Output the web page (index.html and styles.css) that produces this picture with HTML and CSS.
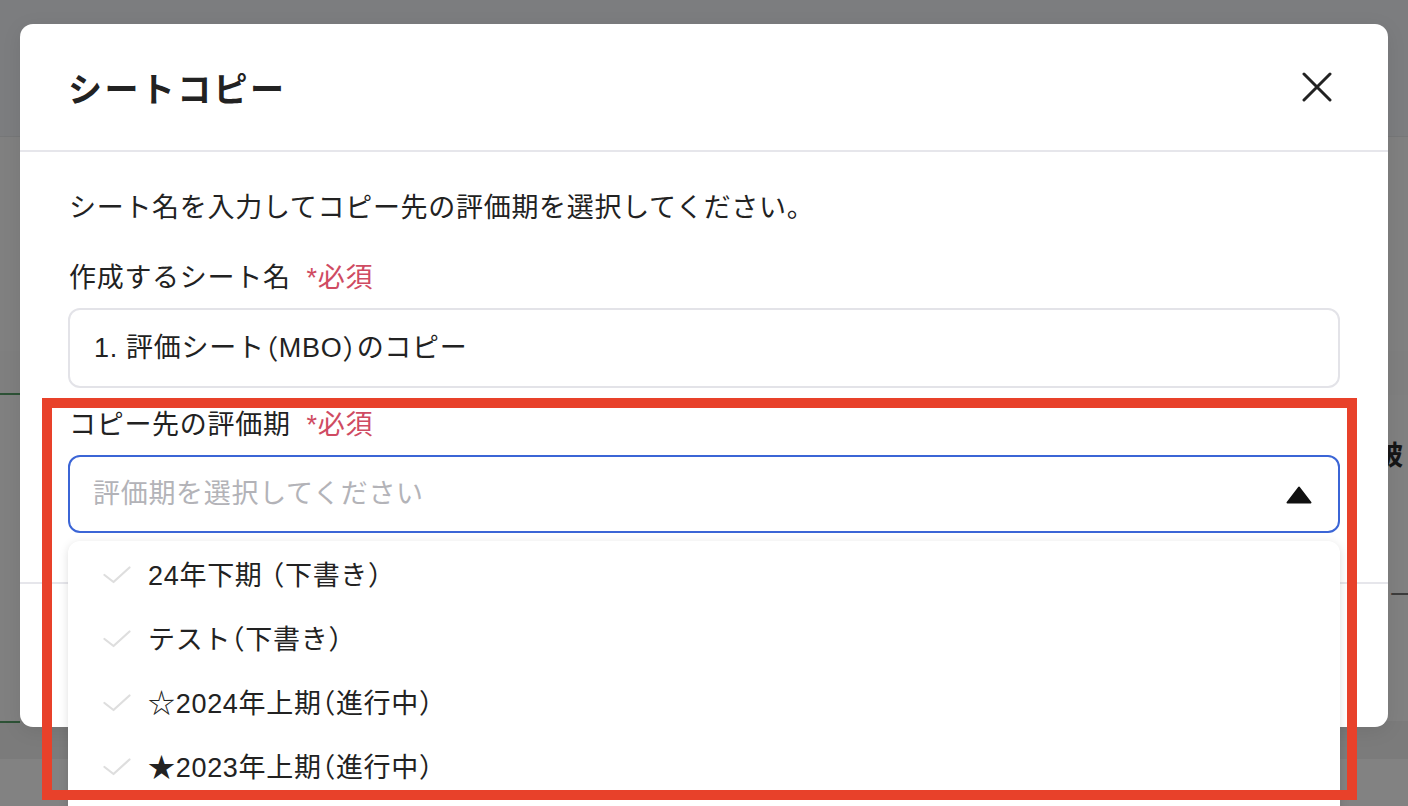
FILE: index.html
```html
<!DOCTYPE html>
<html lang="ja">
<head>
<meta charset="utf-8">
<title>シートコピー</title>
<link rel="stylesheet" href="styles.css">
</head>
<body>
<div class="page">
  <div class="page-header"></div>
  <div class="page-row row-a"></div>
  <div class="page-row row-b"><div class="marker"></div></div>
  <div class="page-row row-c"><span class="bg-text bold">被：</span></div>
  <div class="page-row row-d"><span class="bg-text light">ーテ</span></div>
  <div class="page-row row-e"><div class="marker"></div></div>
  <div class="page-row row-f"></div>
</div>

<div class="modal">
  <div class="modal-header">
    <h1 class="modal-title">シートコピー</h1>
    <button class="close-btn" aria-label="閉じる">
      <svg width="30" height="30" viewBox="0 0 30 30"><path d="M2 2 L28 28 M28 2 L2 28" stroke="#222" stroke-width="3" stroke-linecap="round" fill="none"/></svg>
    </button>
  </div>
  <div class="modal-body">
    <p class="lead">シート名を入力してコピー先の評価期を選択してください。</p>
    <div class="field">
      <label class="label">作成するシート名<span class="req">*必須</span></label>
      <div class="input">1. 評価シート<span class="paren">（</span>MBO<span class="paren">）</span>のコピー</div>
    </div>
    <div class="field field-2">
      <label class="label">コピー先の評価期<span class="req">*必須</span></label>
      <div class="select-wrap">
        <div class="select">
          <span class="placeholder">評価期を選択してください</span>
          <svg class="caret" width="26" height="18" viewBox="0 0 26 18"><path d="M13 1.5 L24.5 16.5 L1.5 16.5 Z" fill="#111" stroke="#111" stroke-width="2" stroke-linejoin="round"/></svg>
        </div>
        <ul class="menu">
          <li class="item"><svg class="check" width="28" height="18" viewBox="0 0 28 18"><path d="M1.5 9 L10.5 16 L26.5 1.5" stroke="#dedede" stroke-width="2.2" fill="none" stroke-linecap="round" stroke-linejoin="round"/></svg><span>24年下期 <span class="paren">（</span>下書き<span class="paren">）</span></span></li>
          <li class="item"><svg class="check" width="28" height="18" viewBox="0 0 28 18"><path d="M1.5 9 L10.5 16 L26.5 1.5" stroke="#dedede" stroke-width="2.2" fill="none" stroke-linecap="round" stroke-linejoin="round"/></svg><span>テスト<span class="paren">（</span>下書き<span class="paren">）</span></span></li>
          <li class="item"><svg class="check" width="28" height="18" viewBox="0 0 28 18"><path d="M1.5 9 L10.5 16 L26.5 1.5" stroke="#dedede" stroke-width="2.2" fill="none" stroke-linecap="round" stroke-linejoin="round"/></svg><span>☆2024年上期<span class="paren">（</span>進行中<span class="paren">）</span></span></li>
          <li class="item"><svg class="check" width="28" height="18" viewBox="0 0 28 18"><path d="M1.5 9 L10.5 16 L26.5 1.5" stroke="#dedede" stroke-width="2.2" fill="none" stroke-linecap="round" stroke-linejoin="round"/></svg><span>★2023年上期<span class="paren">（</span>進行中<span class="paren">）</span></span></li>
        </ul>
      </div>
    </div>
  </div>
  <div class="modal-footer"></div>
</div>

<div class="highlight"></div>
</body>
</html>
```

FILE: styles.css
```css
html, body {
  margin: 0;
  padding: 0;
  width: 1408px;
  height: 806px;
  overflow: hidden;
  background: #808080;
  font-family: "Liberation Sans", "Noto Sans CJK JP", sans-serif;
  color: #222;
}

.page {
  display: flex;
  flex-direction: column;
}
.page-header {
  height: 136px;
  background: #7c7d7f;
  border-bottom: 1px solid #767778;
}
.page-row {
  display: flex;
  align-items: flex-start;
}
.row-a { height: 214px; background: #808080; }
.row-b { height: 44px; background: #7f7f7f; align-items: flex-end; }
.row-c { height: 150px; background: #808080; }
.row-d { height: 176px; background: #808080; }
.row-e { height: 38px; background: #7b7b7b; }
.row-f { height: 100px; background: #828282; }
.marker {
  width: 20px;
  height: 2px;
  background: #2d5236;
}
.bg-text {
  white-space: nowrap;
  font-family: "Noto Sans CJK JP", sans-serif;
  line-height: 1;
}
.bg-text.bold { font-weight: 700; font-size: 27px; color: #161616; margin-top: 45px; margin-left: 1376px; }
.bg-text.light { font-size: 22px; color: #3c3c3c; margin-top: 36px; margin-left: 1389px; }

.modal {
  position: absolute;
  left: 20px;
  top: 24px;
  width: 1368px;
  height: 703px;
  background: #fff;
  border-radius: 13px;
  display: flex;
  flex-direction: column;
  box-shadow: 0 4px 20px rgba(0, 0, 0, 0.08);
}
.modal-header {
  height: 126px;
  border-bottom: 2px solid #e6e6eb;
  display: flex;
  align-items: center;
  justify-content: space-between;
  padding: 0 56px 0 48px;
}
.modal-title {
  margin: 0;
  font-size: 34px;
  font-weight: 700;
  letter-spacing: 2.4px;
  color: #222;
  font-family: "Noto Sans CJK JP", sans-serif;
}
.close-btn {
  border: 0;
  background: none;
  padding: 0;
  width: 30px;
  height: 30px;
  display: flex;
}

.modal-body {
  padding: 36px 48px 49px;
  font-size: 27px;
  letter-spacing: 0.7px;
  line-height: 40px;
}
.lead {
  margin: 0 0 30px 1px;
}
.field {
  display: flex;
  flex-direction: column;
  gap: 10px;
}
.field-2 {
  margin-top: 17px;
}
.label {
  display: block;
  padding-left: 1px;
}
.req {
  color: #cf4b62;
  margin-left: 16px;
}
.paren {
  font-family: "Noto Sans CJK JP", sans-serif;
  font-feature-settings: "halt";
}
.input {
  height: 80px;
  box-sizing: border-box;
  border: 2px solid #e3e3e8;
  border-radius: 12px;
  padding: 0 24px;
  display: flex;
  align-items: center;
  white-space: pre;
}
.select-wrap {
  position: relative;
}
.select {
  height: 78px;
  box-sizing: border-box;
  border: 2px solid #3b65d6;
  border-radius: 12px;
  padding: 0 26px 0 23px;
  display: flex;
  align-items: center;
  justify-content: space-between;
}
.placeholder {
  color: #b3b3b8;
}
.caret {
  display: block;
  margin-top: 2px;
}
.menu {
  position: absolute;
  left: 0;
  right: 0;
  top: calc(100% + 8px);
  margin: 0;
  padding: 2px 0 40px;
  list-style: none;
  background: #fff;
  border-radius: 12px;
  box-shadow: 0 2px 10px rgba(0, 0, 0, 0.13);
  z-index: 5;
}
.item {
  height: 64px;
  display: flex;
  align-items: center;
  padding-left: 35px;
  gap: 17px;
  color: #222;
  white-space: pre;
}
.check {
  display: block;
  flex-shrink: 0;
}

.modal-footer {
  flex: 1;
  border-top: 2px solid #e6e6eb;
}

.highlight {
  position: absolute;
  left: 42px;
  top: 398px;
  width: 1315px;
  height: 402px;
  box-sizing: border-box;
  border: 10px solid #e8412a;
  z-index: 10;
  pointer-events: none;
}
```
